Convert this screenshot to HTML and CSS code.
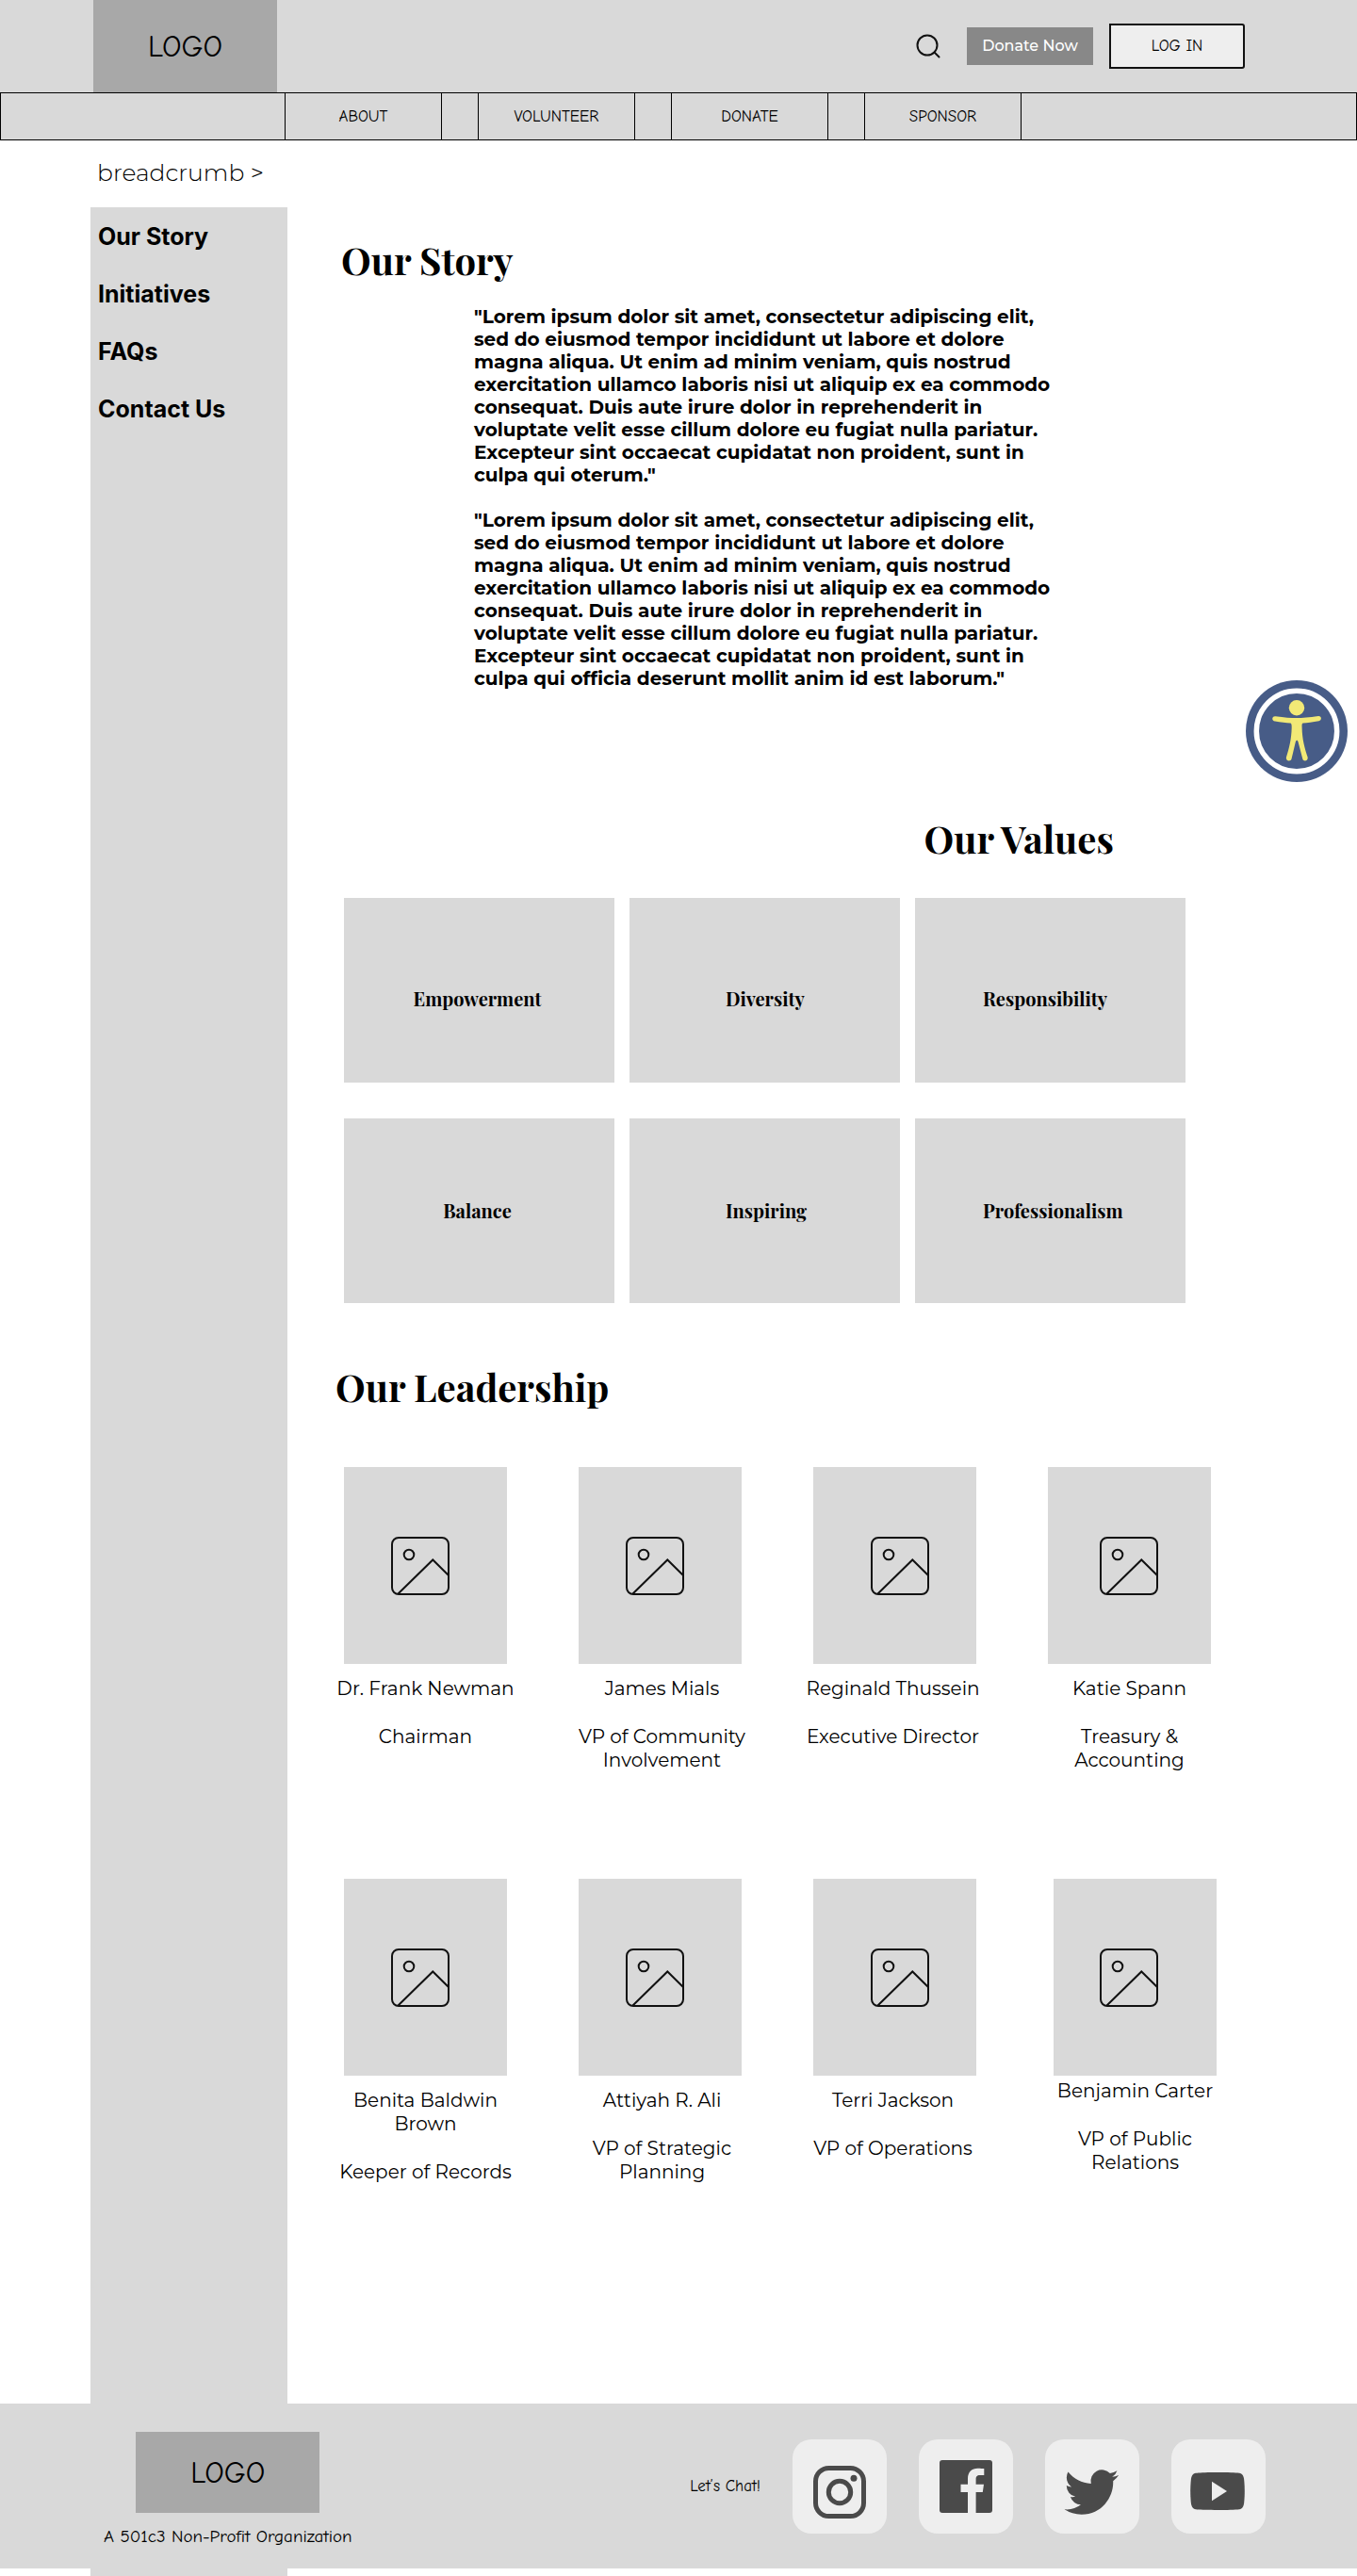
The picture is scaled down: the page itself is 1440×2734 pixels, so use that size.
FILE: index.html
```html
<!DOCTYPE html>
<html lang="en">
<head>
<meta charset="utf-8">
<meta name="viewport" content="width=device-width, initial-scale=1">
<title>Our Story</title>
<link rel="stylesheet" href="styles.css">
</head>
<body>
<svg class="sprite" aria-hidden="true">
  <symbol id="icon-picture" viewBox="0 0 62 62">
    <g fill="none" stroke="#111" stroke-width="2">
      <rect x="1" y="1" width="60" height="60" rx="7"/>
      <circle cx="19" cy="19" r="5.3"/>
      <path d="M7.500 60.500 44.300 24.500 61 41"/>
    </g>
  </symbol>
</svg>

<header class="site-header">
  <a class="logo" href="#">LOGO</a>
  <div class="header-actions">
    <button class="search-button" type="button" aria-label="Search">
      <svg viewBox="0 0 26 26" fill="none" stroke="#111" stroke-width="2" stroke-linecap="round"><circle cx="12" cy="12" r="10.500"/><path d="M19.500 19.500 24.500 24.500"/></svg>
    </button>
    <button class="donate-button" type="button">Donate Now</button>
    <button class="login-button" type="button">LOG IN</button>
  </div>
</header>

<nav class="main-nav" aria-label="Main">
  <ul>
    <li><a href="#">ABOUT</a></li>
    <li><a href="#">VOLUNTEER</a></li>
    <li><a href="#">DONATE</a></li>
    <li><a href="#">SPONSOR</a></li>
  </ul>
</nav>

<div class="breadcrumb"><a href="#">breadcrumb &gt;</a></div>

<div class="page">
  <aside class="sidebar">
    <ul>
      <li><a href="#story">Our Story</a></li>
      <li><a href="#">Initiatives</a></li>
      <li><a href="#">FAQs</a></li>
      <li><a href="#">Contact Us</a></li>
    </ul>
  </aside>

  <main class="content">
    <section class="story" id="story">
      <h1>Our Story</h1>
      <div class="story-text">
        <p>"Lorem ipsum dolor sit amet, consectetur adipiscing elit,<br>sed do eiusmod tempor incididunt ut labore et dolore<br>magna aliqua. Ut enim ad minim veniam, quis nostrud<br>exercitation ullamco laboris nisi ut aliquip ex ea commodo<br>consequat. Duis aute irure dolor in reprehenderit in<br>voluptate velit esse cillum dolore eu fugiat nulla pariatur.<br>Excepteur sint occaecat cupidatat non proident, sunt in<br>culpa qui oterum."</p>
        <p>"Lorem ipsum dolor sit amet, consectetur adipiscing elit,<br>sed do eiusmod tempor incididunt ut labore et dolore<br>magna aliqua. Ut enim ad minim veniam, quis nostrud<br>exercitation ullamco laboris nisi ut aliquip ex ea commodo<br>consequat. Duis aute irure dolor in reprehenderit in<br>voluptate velit esse cillum dolore eu fugiat nulla pariatur.<br>Excepteur sint occaecat cupidatat non proident, sunt in<br>culpa qui officia deserunt mollit anim id est laborum."</p>
      </div>
    </section>

    <section class="values">
      <h2>Our Values</h2>
      <ul class="value-grid">
        <li>Empowerment</li>
        <li>Diversity</li>
        <li>Responsibility</li>
        <li>Balance</li>
        <li>Inspiring</li>
        <li>Professionalism</li>
      </ul>
    </section>

    <section class="leadership">
      <h2>Our Leadership</h2>
      <ul class="team">
        <li class="member">
          <div class="photo"><svg><use href="#icon-picture"/></svg></div>
          <div class="caption"><p>Dr. Frank Newman</p><p>Chairman</p></div>
        </li>
        <li class="member">
          <div class="photo"><svg><use href="#icon-picture"/></svg></div>
          <div class="caption"><p>James Mials</p><p>VP of Community Involvement</p></div>
        </li>
        <li class="member">
          <div class="photo"><svg><use href="#icon-picture"/></svg></div>
          <div class="caption"><p>Reginald Thussein</p><p>Executive Director</p></div>
        </li>
        <li class="member">
          <div class="photo"><svg><use href="#icon-picture"/></svg></div>
          <div class="caption"><p>Katie Spann</p><p>Treasury &amp; Accounting</p></div>
        </li>
        <li class="member">
          <div class="photo"><svg><use href="#icon-picture"/></svg></div>
          <div class="caption"><p>Benita Baldwin Brown</p><p>Keeper of Records</p></div>
        </li>
        <li class="member">
          <div class="photo"><svg><use href="#icon-picture"/></svg></div>
          <div class="caption"><p>Attiyah R. Ali</p><p>VP of Strategic Planning</p></div>
        </li>
        <li class="member">
          <div class="photo"><svg><use href="#icon-picture"/></svg></div>
          <div class="caption"><p>Terri Jackson</p><p>VP of Operations</p></div>
        </li>
        <li class="member member-shifted">
          <div class="photo"><svg><use href="#icon-picture"/></svg></div>
          <div class="caption"><p>Benjamin Carter</p><p>VP of Public Relations</p></div>
        </li>
      </ul>
    </section>
  </main>

  <footer class="site-footer">
    <div class="footer-brand">
      <a class="logo" href="#">LOGO</a>
      <p>A 501c3 Non-Profit Organization</p>
    </div>
    <div class="social">
      <p>Let’s Chat!</p>
      <a href="#" aria-label="Instagram">
        <svg viewBox="0 0 100 100"><g fill="none" stroke="#4a4a4a" stroke-width="5"><rect x="24.500" y="30.500" width="51" height="51" rx="14"/><circle cx="50" cy="56" r="11.700"/></g><circle cx="65" cy="41.200" r="3.500" fill="#4a4a4a"/></svg>
      </a>
      <a href="#" aria-label="Facebook">
        <svg viewBox="0 0 100 100"><rect x="22" y="22" width="56" height="56" rx="3" fill="#4a4a4a"/><path fill="#eee" d="M52 78V56H44.500V47.700H52V41.500C52 34.500 56.300 30.700 62.500 30.700C65.500 30.700 68 31 69.300 31V38H64.800C61.500 38 60.600 39.800 60.600 42V47.700H69L67.800 56H60.600V78Z"/></svg>
      </a>
      <a href="#" aria-label="Twitter">
        <svg viewBox="0 0 100 100"><path fill="#4a4a4a" transform="translate(20.500 26.800) scale(2.400 2.430)" d="M23.953 4.570a10 10 0 01-2.825.775 4.958 4.958 0 002.163-2.723c-.951.555-2.005.959-3.127 1.184a4.920 4.920 0 00-8.384 4.482C7.690 8.095 4.067 6.130 1.640 3.162a4.822 4.822 0 00-.666 2.475c0 1.710.870 3.213 2.188 4.096a4.904 4.904 0 01-2.228-.616v.060a4.923 4.923 0 003.946 4.827 4.996 4.996 0 01-2.212.085 4.936 4.936 0 004.604 3.417 9.867 9.867 0 01-6.102 2.105c-.390 0-.779-.023-1.170-.067a13.995 13.995 0 007.557 2.209c9.053 0 13.998-7.496 13.998-13.985 0-.210 0-.420-.015-.630A9.935 9.935 0 0024 4.590z"/></svg>
      </a>
      <a href="#" aria-label="YouTube">
        <svg viewBox="0 0 100 100"><path fill="#4a4a4a" d="M49 35C60 35 68 35.300 72 35.800C75.500 36.300 76.700 39 77.200 43C78 51 78 59 77.200 67C76.700 71 75.500 73.700 72 74.200C64 75.200 34 75.200 26 74.200C22.500 73.700 21.300 71 20.800 67C20 59 20 51 20.800 43C21.300 39 22.500 36.300 26 35.800C30 35.300 38 35 49 35Z"/><path fill="#eee" d="M43 44.700 59 55 43 65.300Z"/></svg>
      </a>
    </div>
  </footer>
</div>

<button class="access-badge" type="button" aria-label="Accessibility options">
  <svg viewBox="-54 -54 108 108">
    <circle r="54" fill="#475c87"/>
    <circle r="42.700" fill="none" stroke="#fff" stroke-width="5.500"/>
    <g fill="#f2e976"><circle cy="-24.700" r="8.200"/><path d="M-22.500-15.800C-13-14.500-6-14 0-14C6-14 13-14.500 23-16C26.500-16.300 27-11.500 23.500-10.800C17-9.500 11-8.800 6.500-8.500C5.500-8 5.500-6.500 5.600-4C5.800 9 8.500 18 11.600 27.500C12.500 31.500 7.500 33 6.300 29.500L1.600 11.500C1 9 -.500 9-1.200 11.500L-5.500 29.500C-6.800 33-12 31.500-11 27.500C-8 18-5.600 9-5.300-4C-5.300-6.500-5.500-8-6.500-8.500C-11-8.800-17-9.500-23-10.500C-27-11-26.500-16.200-22.500-15.800Z"/></g>
  </svg>
</button>
</body>
</html>
```
FILE: styles.css
```css
:root {
  --grey: #d9d9d9;
  --grey-dark: #a8a8a8;
  --line: #000;
  --hand: "Comic Neue", Lato, sans-serif;
  --body: Montserrat, "Open Sans", sans-serif;
  --display: "Playfair Display", "Liberation Serif", serif;
}

* { box-sizing: border-box; }

body {
  position: relative;
  margin: 0;
  background: #fff;
  color: #000;
  font-family: var(--body);
}

h1, h2, p, ul { margin: 0; padding: 0; }
ul { list-style: none; }
a { color: inherit; text-decoration: none; }
button { padding: 0; border: 0; background: none; color: inherit; cursor: pointer; }
svg { display: block; }
.sprite { display: none; }

h1, h2 {
  font: 700 40px/48px var(--display);
}

.logo {
  display: flex;
  align-items: center;
  justify-content: center;
  width: 195px;
  padding-top: 2px;
  background: var(--grey-dark);
  font: 32px/40px var(--hand);
}

/* Header */
.site-header {
  display: flex;
  justify-content: space-between;
  height: 98px;
  padding: 0 119px 0 99px;
  background: var(--grey);
}

.header-actions { display: flex; align-items: center; }

.search-button {
  width: 26px;
  height: 26px;
  margin-right: 28px;
}

.donate-button {
  width: 134px;
  height: 40px;
  margin-right: 17px;
  background: #888;
  color: #fff;
  font: 500 16px/20px var(--body);
}

.login-button {
  width: 144px;
  height: 48px;
  border: 2px solid #111;
  border-radius: 0 3px 3px 0;
  background: #eee;
  font: 17px/20px var(--hand);
}

/* Main navigation */
.main-nav {
  border: 1px solid var(--line);
  background: var(--grey);
}

.main-nav ul {
  display: flex;
  gap: 38px;
  padding-left: 301px;
}

.main-nav a {
  display: block;
  width: 167px;
  border: solid var(--line);
  border-width: 0 1px;
  font: 17px/49px var(--hand);
  text-align: center;
}

.breadcrumb {
  padding: 18px 103px 21px;
  font-size: 25px;
  font-weight: 300;
  line-height: 32px;
}

/* The sidebar column runs behind the footer to the end of the page */
.page {
  display: grid;
  grid-template-columns: 96px 209px minmax(0, 1fr);
  grid-template-rows: auto auto 8px;
}

.sidebar {
  grid-column: 2;
  grid-row: 1 / span 3;
  padding: 1px 0 0 8px;
  background: var(--grey);
  font-family: Inter, sans-serif;
  font-size: 25px;
  font-weight: 700;
  line-height: 61px;
}

.content {
  grid-column: 3;
  grid-row: 1;
  padding: 32px 0 233px;
}

/* Story */
.story h1 { padding-left: 57px; }

.story-text {
  display: grid;
  gap: 24px;
  margin: 24px 0 0 198px;
  font-size: 20px;
  font-weight: 700;
  line-height: 24px;
}

/* Values */
.values {
  max-width: 953px;
  margin-top: 134px;
  padding-left: 60px;
}

.values h2 {
  padding-right: 76px;
  text-align: right;
}

.value-grid {
  display: grid;
  grid-template-columns: repeat(3, 1fr);
  gap: 38px 16px;
  margin-top: 39px;
}

.value-grid li {
  height: 196px;
  padding-top: 93px;
  background: var(--grey);
  font: 700 20px/28px var(--display);
}

.value-grid li:nth-child(n + 4) { padding-top: 84px; }
.value-grid li:nth-child(3n + 1) { padding-right: 4px; text-align: center; }
.value-grid li:nth-child(3n + 2) { padding-left: 102px; }
.value-grid li:nth-child(3n) { padding-left: 72px; }

/* Leadership */
.leadership {
  margin-top: 65px;
  padding-left: 22px;
}

.leadership h2 { padding-left: 29px; }

.team {
  display: grid;
  grid-template-columns: repeat(4, 1fr);
  gap: 113px 0;
  max-width: 996px;
  margin-top: 61px;
}

.member {
  display: flex;
  flex-direction: column;
  align-items: center;
  gap: 14px;
}

.photo {
  display: flex;
  align-items: center;
  width: 173px;
  height: 209px;
  padding-left: 50px;
  background: var(--grey);
}

.photo svg { width: 62px; height: 62px; }
.member:nth-child(4n + 3) .photo { padding-left: 61px; }
.member:nth-child(4n) .photo { padding-left: 55px; }

.caption {
  display: grid;
  gap: 26px;
  width: 190px;
  font-size: 20px;
  line-height: 25px;
  text-align: center;
}

.member:nth-child(4n + 2) .caption { margin-left: 4px; }
.member:nth-child(4n + 3) .caption { margin-right: 4px; }

.member-shifted { gap: 4px; padding-left: 12px; }
.member-shifted:nth-child(4n) .photo { padding-left: 49px; }

/* Footer */
.site-footer {
  grid-column: 1 / -1;
  grid-row: 2;
  display: flex;
  align-items: center;
  justify-content: space-between;
  padding: 22px 97px 22px 110px;
  background: var(--grey);
}

.footer-brand {
  display: flex;
  flex-direction: column;
  align-items: center;
  gap: 13px;
  padding-top: 8px;
  font: 19px/24px var(--hand);
}

.footer-brand .logo { height: 86px; }

.social {
  display: flex;
  align-items: center;
  gap: 34px;
}

.social p { font: 17px/24px var(--hand); }

.social a {
  width: 100px;
  height: 100px;
  border-radius: 20px;
  background: #eee;
}

/* Floating accessibility control */
.access-badge {
  position: absolute;
  top: 722px;
  right: 10px;
  width: 108px;
  height: 108px;
}
```
